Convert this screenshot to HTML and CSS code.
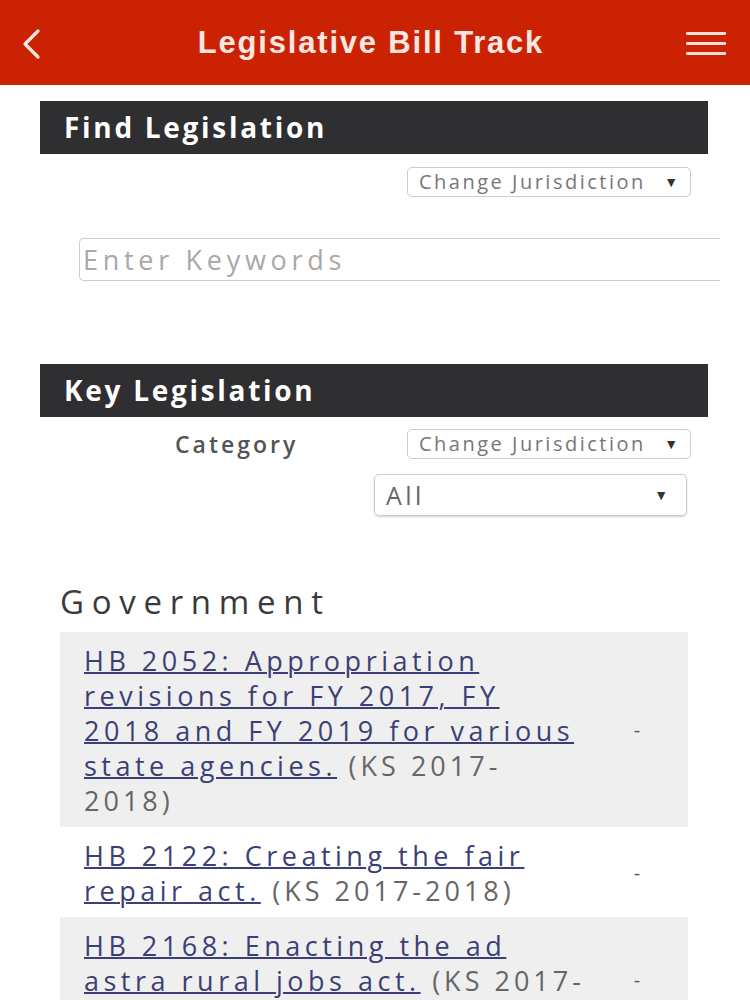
FILE: index.html
```html
<!DOCTYPE html>
<html lang="en">
<head>
    <meta charset="UTF-8">
    <meta name="viewport" content="width=device-width, initial-scale=1.0">
    <title>Legislative Bill Track</title>
    <link rel="stylesheet" href="styles.css">
</head>
<body>

<header class="topbar">
    <a class="back" href="#" aria-label="Back">
        <svg width="22" height="32" viewBox="0 0 22 32">
            <polyline points="18,3 5,16 18,29" fill="none" stroke="#fbe6e2" stroke-width="3.2" stroke-linecap="round" stroke-linejoin="round"/>
        </svg>
    </a>
    <h1 class="app-title">Legislative Bill Track</h1>
    <a class="menu" href="#" aria-label="Menu">
        <span></span><span></span><span></span>
    </a>
</header>

<main class="content">
    <h2 class="section-title">Find Legislation</h2>
    <div class="jurisdiction-row">
        <div class="small-select">Change Jurisdiction <span class="caret">&#9660;</span></div>
    </div>
    <div class="keyword-row">
        <input type="text" class="keyword-input" placeholder="Enter Keywords">
    </div>

    <h2 class="section-title key">Key Legislation</h2>
    <div class="category-row">
        <span class="category-label">Category</span>
        <div class="small-select">Change Jurisdiction <span class="caret">&#9660;</span></div>
    </div>
    <div class="all-row">
        <div class="big-select">All <span class="caret">&#9660;</span></div>
    </div>

    <h3 class="group-title">Government</h3>
    <table class="bills">
        <tr class="shaded">
            <td class="bill"><a href="#">HB 2052: Appropriation revisions for FY 2017, FY 2018 and FY 2019 for various state agencies.</a> <span class="session">(KS 2017-2018)</span></td>
            <td class="status">-</td>
        </tr>
        <tr>
            <td class="bill"><a href="#">HB 2122: Creating the fair repair act.</a> <span class="session">(KS 2017-2018)</span></td>
            <td class="status">-</td>
        </tr>
        <tr class="shaded">
            <td class="bill"><a href="#">HB 2168: Enacting the ad astra rural jobs act.</a> <span class="session">(KS 2017-2018)</span></td>
            <td class="status">-</td>
        </tr>
    </table>
</main>

</body>
</html>
```

FILE: styles.css
```css
body {
    margin: 0;
    font-family: "Open Sans", "Noto Sans", sans-serif;
    background: #fff;
    color: #555;
}

.topbar {
    height: 85px;
    background: #cc2204;
    display: flex;
    align-items: center;
    justify-content: space-between;
    padding: 0 24px 0 20px;
    box-sizing: border-box;
}
.back {
    display: flex;
    padding-top: 2px;
}
.app-title {
    margin: 0;
    font-family: "Liberation Sans", Arial, sans-serif;
    font-size: 31px;
    font-weight: bold;
    letter-spacing: 1.8px;
    color: #fbe6e2;
    padding-left: 14px;
}
.menu {
    display: flex;
    flex-direction: column;
    gap: 7px;
    width: 40px;
    padding-top: 2px;
}
.menu span {
    display: block;
    height: 3px;
    background: #fbe0da;
    border-radius: 1px;
}

.content {
    padding: 16px 42px 0 40px;
}

.section-title {
    margin: 0;
    height: 53px;
    line-height: 53px;
    background: #2f2e30;
    color: #fff;
    font-size: 28px;
    font-weight: 700;
    letter-spacing: 2.7px;
    padding-left: 24px;
}

.jurisdiction-row {
    display: flex;
    justify-content: flex-end;
    padding: 13px 17px 0 0;
}
.small-select {
    width: 284px;
    height: 30px;
    box-sizing: border-box;
    border: 1px solid #ccc;
    border-radius: 5px;
    font-size: 20px;
    line-height: 28px;
    letter-spacing: 2.5px;
    color: #777;
    padding: 0 12px 0 11px;
    display: flex;
    justify-content: space-between;
}
.caret {
    font-size: 14px;
    letter-spacing: 0;
    color: #333;
}

.keyword-row {
    padding: 41px 0 0 39px;
    margin-right: -12px;
}
.keyword-input {
    width: 100%;
    height: 43px;
    box-sizing: border-box;
    border: 1px solid #ccc;
    border-right: none;
    border-radius: 5px 0 0 5px;
    font-family: "Open Sans", sans-serif;
    font-size: 27px;
    letter-spacing: 4.7px;
    padding: 0 3px;
    color: #555;
}
.keyword-input::placeholder {
    color: #a8a8a8;
}

.section-title.key {
    margin-top: 83px;
}

.category-row {
    display: flex;
    align-items: center;
    justify-content: space-between;
    padding: 11px 17px 0 135px;
}
.category-label {
    font-size: 23px;
    font-weight: 600;
    letter-spacing: 3px;
    color: #555;
}

.all-row {
    display: flex;
    justify-content: flex-end;
    padding: 14px 21px 0 0;
}
.big-select {
    width: 313px;
    height: 42px;
    box-sizing: border-box;
    border: 1px solid #ccc;
    border-radius: 5px;
    box-shadow: 0 1px 2px rgba(0, 0, 0, 0.18);
    font-size: 25px;
    line-height: 40px;
    letter-spacing: 3.5px;
    color: #666;
    padding: 0 18px 0 11px;
    display: flex;
    justify-content: space-between;
}

.group-title {
    margin: 68px 0 0 20px;
    font-size: 33px;
    font-weight: 400;
    letter-spacing: 7.7px;
    color: #3a3a3a;
    line-height: 36px;
}

.bills {
    margin: 12px 20px 0 20px;
    width: 628px;
    border-collapse: collapse;
}
.bills tr.shaded {
    background: #efefef;
}
.bill {
    width: 502px;
    padding: 11px 0 9px 24px;
    font-size: 27px;
    line-height: 35px;
    letter-spacing: 4.5px;
    color: #666;
}
.bill a {
    color: #3c3f75;
    text-decoration: underline;
    text-decoration-thickness: 2px;
}
.session {
    letter-spacing: 4px;
}
.status {
    text-align: center;
    font-size: 20px;
    color: #555;
    vertical-align: middle;
}
```
